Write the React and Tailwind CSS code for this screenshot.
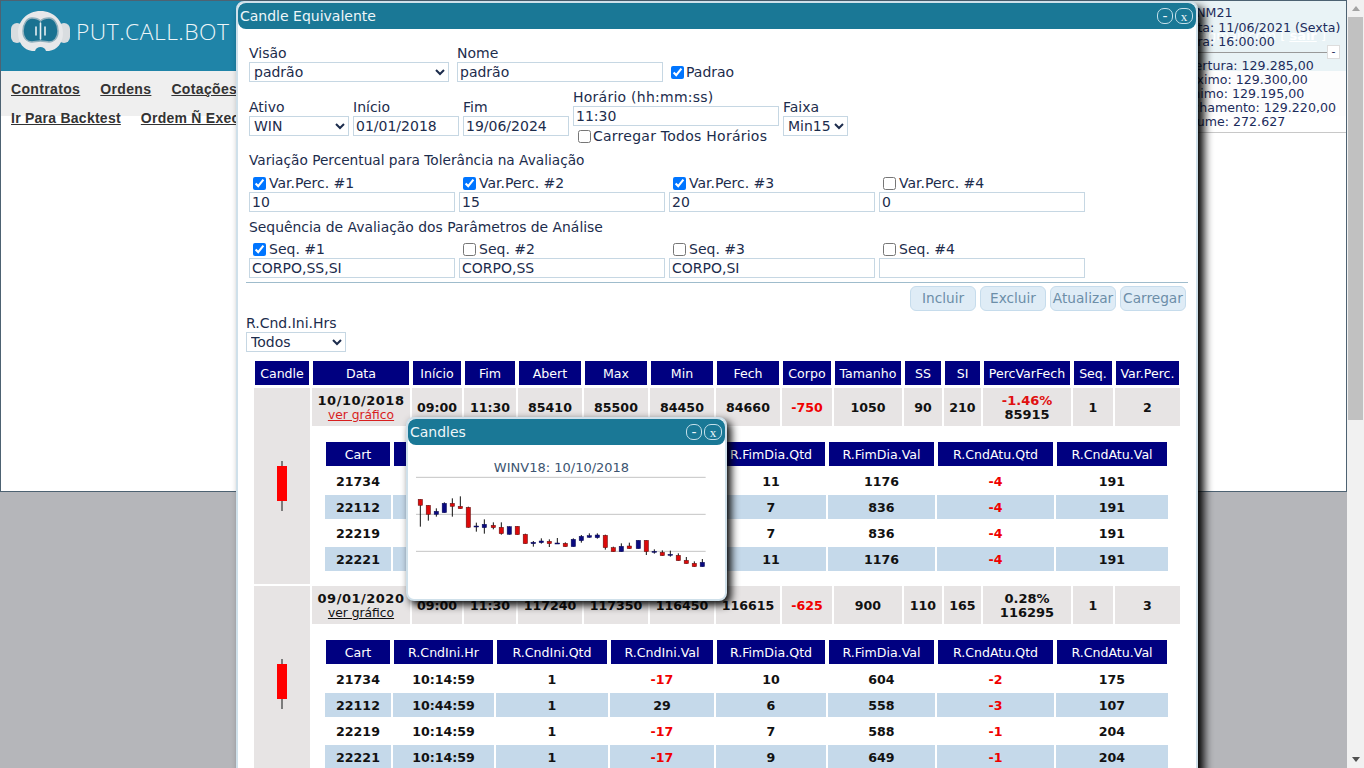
const mainCols = "grid grid-cols-[56px_98px_50px_52px_64px_64px_64px_64px_50px_68px_38px_37px_88px_40px_65px] gap-[2px]";
const subCols = "grid grid-cols-[66px_101px_112px_104px_110px_107px_117px_112px] gap-[2px]";
const mainHead = ["Candle","Data","Início","Fim","Abert","Max","Min","Fech","Corpo","Tamanho","SS","SI","PercVarFech","Seq.","Var.Perc."];
const subHead = ["Cart","R.CndIni.Hr","R.CndIni.Qtd","R.CndIni.Val","R.FimDia.Qtd","R.FimDia.Val","R.CndAtu.Qtd","R.CndAtu.Val"];
const groups = [
  { date:"10/10/2018", linkRed:true, vals:["09:00","11:30","85410","85500","84450","84660","-750","1050","90","210"], pct:"-1.46%", pctVal:"85915", pctRed:true, seq:"1", vp:"2",
    rows:[["21734","10:14:59","1","-17","11","1176","-4","191"],["22112","10:44:59","1","29","7","836","-4","191"],["22219","10:14:59","1","-17","7","836","-4","191"],["22221","10:14:59","1","-17","11","1176","-4","191"]]},
  { date:"09/01/2020", linkRed:false, vals:["09:00","11:30","117240","117350","116450","116615","-625","900","110","165"], pct:"0.28%", pctVal:"116295", pctRed:false, seq:"1", vp:"3",
    rows:[["21734","10:14:59","1","-17","10","604","-2","175"],["22112","10:44:59","1","29","6","558","-3","107"],["22219","10:14:59","1","-17","7","588","-1","204"],["22221","10:14:59","1","-17","9","649","-1","204"]]},
];
const candles = [
[61,268,350,268,286,"r"],[85,286,332,286,313,"r"],[109,295,320,304,313,"b"],[133,277,308,280,308,"b"],[157,265,320,280,289,"r"],[181,259,296,289,296,"r"],[205,290,353,292,352,"r"],[229,338,365,348,350,"b"],[253,328,371,343,353,"b"],[280,337,358,346,353,"r"],[304,337,374,352,371,"r"],[328,349,374,350,373,"b"],[352,349,374,349,374,"r"],[376,371,401,373,401,"r"],[400,393,410,397,401,"b"],[424,385,401,393,398,"b"],[448,388,411,394,401,"r"],[472,384,401,399,401,"b"],[496,397,410,400,410,"r"],[520,385,410,388,410,"b"],[544,375,398,379,392,"b"],[568,370,383,377,382,"b"],[592,370,386,375,383,"b"],[616,374,419,376,413,"r"],[640,410,425,413,425,"r"],[664,400,425,409,425,"b"],[688,398,416,408,416,"r"],[715,391,416,391,416,"b"],[739,391,435,391,425,"r"],[763,418,431,424,427,"b"],[787,421,437,427,437,"r"],[811,422,440,433,436,"b"],[835,430,452,436,452,"r"],[859,441,461,451,461,"r"],[883,454,470,460,470,"r"],[907,447,470,457,470,"b"],
];

function Logo() {
  return (
    <svg width="60" height="44" viewBox="0 0 60 44" className="shrink-0">
      <rect x="0" y="13" width="12" height="20" rx="6" fill="#d9dde0" />
      <rect x="47" y="13" width="12" height="20" rx="6" fill="#d9dde0" />
      <path d="M29.500 1C16 1 7 11 7 23c0 10 6 17 14 18h3c1-3 3-4 5.500-4s4.500 1 5.500 4h3c8-1 14-8 14-18C52 11 43 1 29.500 1Z" fill="#e6e8ea" />
      <path d="M21 8c4 0 6.500 1 8.500 3 2-2 4.500-3 8.500-3 5 0 9 6 9 13s-4 11-9 11c-3 0-5-1-8.500-1s-5.500 1-8.500 1c-5 0-9-4-9-11S16 8 21 8Z" fill="#1a7291" stroke="#8fb0bd" strokeWidth="1.500" />
      <path d="M25 17v8M29.500 13v16M34 17v8" stroke="#e6eef2" strokeWidth="1.600" strokeLinecap="round" />
    </svg>
  );
}

function TitleBar({ title }) {
  return (
    <div className="flex h-[26px] items-center justify-between rounded-lg bg-[#1a7896] pl-[2px] pr-[3px] text-[14px] text-[#eef6f9]">
      <span>{title}</span>
      <div className="flex gap-[2px]">
        <span className="flex h-[16px] w-[16px] items-center justify-center rounded-[7px] border border-[#c5e0ea] text-[14px] leading-none">-</span>
        <span className="flex h-[16px] w-[18px] items-center justify-center rounded-[7px] border border-[#c5e0ea] font-['Liberation_Serif',serif] text-[13px] leading-none">x</span>
      </div>
    </div>
  );
}

const ctrl = "block h-[20px] border border-[#c6d7e3] bg-white text-[14px] text-[#1c2c4c] outline-none";

function Field({ label, value, w, cls = "" }) {
  return (
    <div className={cls}>
      <div className="h-[16px] whitespace-nowrap text-[14px] leading-[14px]">{label}</div>
      <input readOnly defaultValue={value} className={`${ctrl} ${w} px-[2px]`} />
    </div>
  );
}

function Sel({ label, value, w, cls = "" }) {
  return (
    <div className={cls}>
      <div className="h-[16px] whitespace-nowrap text-[14px] leading-[14px]">{label}</div>
      <select defaultValue={value} className={`${ctrl} ${w}`}>
        <option>{value}</option>
      </select>
    </div>
  );
}

function ChecksRow({ items, top }) {
  return (
    <div className={`${top} flex gap-[4px] pl-[11px]`}>
      {items.map((it) => (
        <div key={it.label} className="w-[206px]">
          <label className="flex h-[17px] items-center pb-[1px] pl-[4px] text-[14px] leading-[16px]">
            <input type="checkbox" readOnly checked={it.on} className="mr-[3px] h-[13px] w-[13px]" />
            {it.label}
          </label>
          <input readOnly defaultValue={it.value} className={`${ctrl} w-[206px] px-[2px]`} />
        </div>
      ))}
    </div>
  );
}

function Btn({ children }) {
  return (
    <span className="flex h-[25px] w-[66px] items-center justify-center rounded-md border border-[#c6dcec] bg-[#dfecf6] text-[13.700px] text-[#6c8ea8]">{children}</span>
  );
}

function Candle() {
  return (
    <div className="relative flex h-[50px] w-[10px] justify-center">
      <div className="h-full w-[2px] bg-[#7c7c7c]" />
      <div className="absolute left-0 top-[5px] h-[35px] w-[10px] bg-[#ff0000]" />
    </div>
  );
}

function Group({ g }) {
  const cell = "flex items-center justify-center bg-[#e7e4e4] pt-[2px] font-bold text-[12.600px] text-[#111]";
  return (
    <div className={`${mainCols} mb-[2px]`}>
      <div className="row-span-2 flex items-center justify-center bg-[#e7e4e4]"><Candle /></div>
      <div className="flex h-[38px] flex-col items-center justify-center bg-[#e7e4e4] pt-px leading-[14px]">
        <span className="text-[13px] font-bold tracking-[0.5px] text-[#111]">{g.date}</span>
        <span className={`text-[12.300px] underline ${g.linkRed ? "text-[#d81e1e]" : "text-[#111]"}`}>ver gráfico</span>
      </div>
      {g.vals.map((v, i) => (
        <div key={i} className={`${cell} ${v.startsWith("-") ? "text-[#f00000]" : ""}`}>{v}</div>
      ))}
      <div className="flex flex-col items-center justify-center bg-[#e7e4e4] pt-px text-[13px] font-bold leading-[14px] text-[#111]">
        <span className={g.pctRed ? "text-[#e01010]" : ""}>{g.pct}</span>
        <span>{g.pctVal}</span>
      </div>
      <div className={cell}>{g.seq}</div>
      <div className={cell}>{g.vp}</div>
      <div className="col-span-14 pb-[13px] pl-[13px] pt-[13px]">
        <div className={subCols}>
          {subHead.map((h) => (
            <div key={h} className="m-px flex h-[24px] items-center justify-center bg-[#000080] pt-[2px] text-[12.600px] text-white">{h}</div>
          ))}
          {g.rows.map((r, ri) =>
            r.map((v, ci) => (
              <div key={`${ri}-${ci}`} className={`flex h-[24px] items-center justify-center pt-[2px] text-[12.600px] font-bold ${ri % 2 ? "bg-[#c5d9ea]" : "bg-white"} ${v.startsWith("-") ? "text-[#f00000]" : "text-[#111]"}`}>{v}</div>
            ))
          )}
        </div>
      </div>
    </div>
  );
}

export default function App() {
  return (
    <div className="relative h-[768px] w-[1364px] overflow-hidden bg-[#b5b6ba] font-['DejaVu_Sans',sans-serif] text-[#1c2c4c]">
      {/* page */}
      <div className="h-[492px] w-[1347px] border border-[#4d6272] bg-white">
        <div className="flex h-[70px] items-center justify-between bg-[#1f84a8] pl-[10px] pr-[20px]">
          <div className="-mt-[8px] flex items-center gap-[5px]">
            <Logo />
            <span className="font-['Open_Sans',sans-serif] text-[22.800px] font-light tracking-[0.5px] text-[#eef6f9]">PUT.CALL.BOT</span>
          </div>
          <span className="text-[13px] text-white">usuario@gmail.com [ <b className="underline">sair</b> ]</span>
        </div>
        <div className="h-[45px] bg-[#efefef] font-['Liberation_Sans',sans-serif] text-[14px] font-bold text-[#333]">
          <div className="flex gap-[20px] pl-[10px] pt-[10px] leading-[16px] tracking-[0.35px]">
            <span className="underline">Contratos</span>
            <span className="underline">Ordens</span>
            <span className="underline">Cotações</span>
          </div>
          <div className="flex gap-[20px] pl-[10px] pt-[13px] leading-[16px] tracking-[0.25px]">
            <span className="underline">Ir Para Backtest</span>
            <span className="whitespace-nowrap underline">Ordem Ñ Executada</span>
          </div>
        </div>
      </div>

      {/* quote panel */}
      <div className="absolute left-[1150px] top-px h-[132px] w-[196px] border-b border-[#c8c8c8] bg-white/90 text-[12.600px] leading-[14px] text-[#1c2c5c]">
        <div className="pl-[30px]">
          <div className="pt-[5px]">WINM21</div>
          <div className="mt-px whitespace-nowrap">Data: 11/06/2021 (Sexta)</div>
          <div>Hora: 16:00:00</div>
        </div>
        <div className="relative mt-[3px] h-[7px]">
          <div className="absolute left-0 right-[19px] top-0 h-px bg-[#999]" />
          <span className="absolute right-[6px] top-[-7px] flex h-[14px] w-[13px] items-center justify-center border border-[#ddd] bg-white text-[11px]">-</span>
        </div>
        <div className="pl-[28px]">
          <div>Abertura: 129.285,00</div>
          <div>Máximo: 129.300,00</div>
          <div>Mínimo: 129.195,00</div>
          <div className="whitespace-nowrap">Fechamento: 129.220,00</div>
          <div>Volume: 272.627</div>
        </div>
      </div>

      {/* scrollbar */}
      <div className="absolute right-0 top-0 flex h-[768px] w-[17px] flex-col items-center bg-[#f1f1f1]">
        <div className="mt-[6px] h-0 w-0 border-x-[4px] border-b-[5px] border-x-transparent border-b-[#a3a3a3]" />
        <div className="mt-[6px] h-[403px] w-[15px] bg-[#c1c1c1]" />
        <div className="mt-auto mb-[6px] h-0 w-0 border-x-[4px] border-t-[5px] border-x-transparent border-t-[#505050]" />
      </div>

      {/* main dialog */}
      <div className="absolute left-[236px] top-px h-[900px] w-[962px] rounded-t-lg border-2 border-[#cfe0ea] bg-white shadow-[6px_6px_10px_#000]">
        <TitleBar title="Candle Equivalente" />
        <div className="mt-[17px] flex items-end pl-[11px]">
          <Sel label="Visão" value="padrão" w="w-[200px]" />
          <Field label="Nome" value="padrão" w="w-[206px]" cls="ml-[8px]" />
          <label className="ml-[8px] flex h-[20px] items-center text-[14px]">
            <input type="checkbox" readOnly checked className="mr-[2px] h-[13px] w-[13px]" />
            Padrao
          </label>
        </div>
        <div className="mt-[8px] flex items-start gap-[4px] pl-[11px]">
          <Sel label="Ativo" value="WIN" w="w-[100px]" cls="mt-[10px]" />
          <Field label="Início" value="01/01/2018" w="w-[106px]" cls="mt-[10px]" />
          <Field label="Fim" value="19/06/2024" w="w-[106px]" cls="mt-[10px]" />
          <div>
            <div className="h-[16px] whitespace-nowrap text-[14px] leading-[14px] tracking-[0.25px]">Horário (hh:mm:ss)</div>
            <input readOnly defaultValue="11:30" className={`${ctrl} w-[206px] px-[2px]`} />
            <label className="mt-[2px] mb-px flex h-[16px] items-center whitespace-nowrap pl-[5px] text-[14px] tracking-[0.25px]">
              <input type="checkbox" readOnly className="mr-[2px] h-[13px] w-[13px]" />
              Carregar Todos Horários
            </label>
          </div>
          <Sel label="Faixa" value="Min15" w="w-[65px]" cls="mt-[10px]" />
        </div>
        <div className="mt-[7px] h-[16px] pl-[11px] text-[13.700px] leading-[16px]">Variação Percentual para Tolerância na Avaliação</div>
        <ChecksRow top="mt-[7px]" items={[
          { label: "Var.Perc. #1", on: true, value: "10" },
          { label: "Var.Perc. #2", on: true, value: "15" },
          { label: "Var.Perc. #3", on: true, value: "20" },
          { label: "Var.Perc. #4", on: false, value: "0" },
        ]} />
        <div className="mt-[7px] h-[16px] pl-[11px] text-[13.900px] leading-[16px]">Sequência de Avaliação dos Parâmetros de Análise</div>
        <ChecksRow top="mt-[6px]" items={[
          { label: "Seq. #1", on: true, value: "CORPO,SS,SI" },
          { label: "Seq. #2", on: false, value: "CORPO,SS" },
          { label: "Seq. #3", on: false, value: "CORPO,SI" },
          { label: "Seq. #4", on: false, value: "" },
        ]} />
        <div className="ml-[8px] mr-[8px] mt-[4px] h-px bg-[#9fbccc]" />
        <div className="mr-[10px] mt-[3px] flex justify-end gap-[4px]">
          <Btn>Incluir</Btn>
          <Btn>Excluir</Btn>
          <Btn>Atualizar</Btn>
          <Btn>Carregar</Btn>
        </div>
        <Sel label="R.Cnd.Ini.Hrs" value="Todos" w="w-[100px]" cls="ml-[8px] mt-[5px]" />
        <div className="ml-[16px] mt-[8px]">
          <div className={`${mainCols} mb-[2px]`}>
            {mainHead.map((h) => (
              <div key={h} className="m-px flex h-[24px] items-center justify-center bg-[#000080] pt-[2px] text-[12.600px] text-white">{h}</div>
            ))}
          </div>
          {groups.map((g) => <Group key={g.date} g={g} />)}
        </div>
      </div>

      {/* candles dialog */}
      <div className="absolute left-[406px] top-[417px] h-[184px] w-[321px] rounded-lg border-2 border-[#cfe0ea] bg-white shadow-[4px_4px_8px_#000]">
        <TitleBar title="Candles" />
        <div className="mt-[16px] pr-[10px] text-center text-[13px] leading-[14px] text-[#3c5470]">WINV18: 10/10/2018</div>
        <svg width="300" height="95" viewBox="30 195 900 285" className="ml-[2px] block">
          {[202, 313, 424].map((y) => (
            <line key={y} x1="48" x2="917" y1={y} y2={y} stroke="#c4c4c4" strokeWidth="3" />
          ))}
          {candles.map(([x, wt, wb, bt, bb, c]) => (
            <g key={x}>
              <line x1={x} x2={x} y1={wt} y2={wb} stroke="#111" strokeWidth="3" />
              <rect x={x - (bb - bt < 5 ? 7 : 6.500)} y={bt} width={bb - bt < 5 ? 14 : 13} height={Math.max(bb - bt, 3)} fill={c === "r" ? "#dd0a0a" : "#0a0a80"} stroke={c === "r" ? "#551010" : "#0a0a50"} strokeWidth="1.500" />
            </g>
          ))}
        </svg>
      </div>
    </div>
  );
}
